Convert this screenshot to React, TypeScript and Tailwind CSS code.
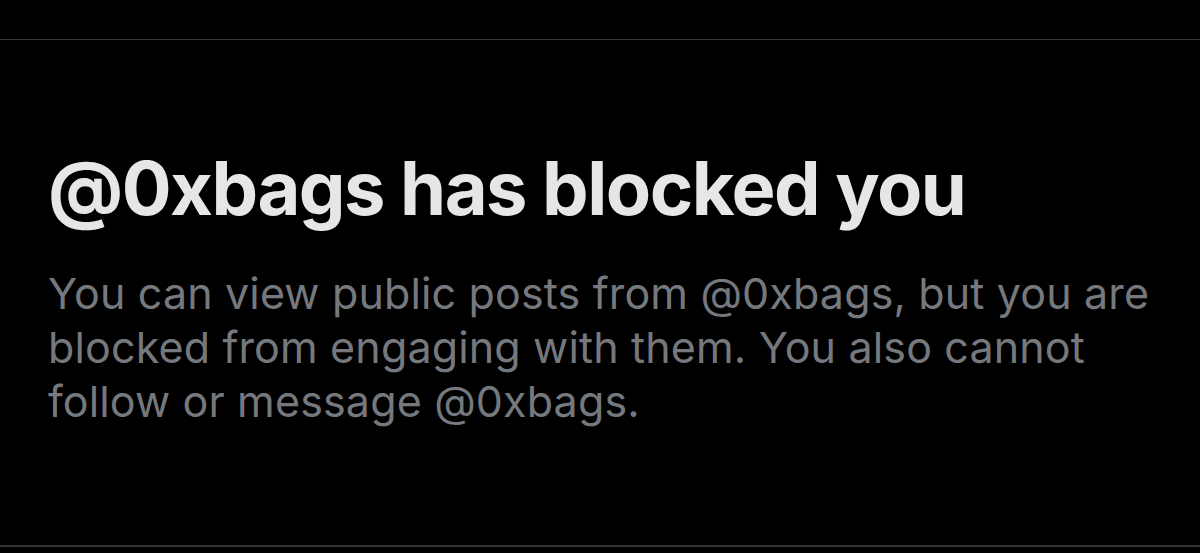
export default function App() {
  return (
    <div className="w-[1200px] h-[553px] bg-black flex flex-col overflow-hidden" style={{ fontFamily: "Inter, 'Noto Sans', sans-serif" }}>
      <div className="h-[39px] shrink-0" />
      <div className="border-t border-[#333639] flex-1 flex flex-col px-[48px] pt-[108px]">
        <h1 className="text-[74px] leading-[80px] font-bold text-[#e4e6e7] tracking-[-1.5px]">
          @0xbags has blocked you
        </h1>
        <p className="mt-[38px] w-[1120px] text-[43px] leading-[54px] text-[#75797e] tracking-[0.15px]">
          You can view public posts from @0xbags, but you are blocked from engaging with them. You also cannot follow or message @0xbags.
        </p>
      </div>
      <div className="h-[2px] bg-[#2f3336] shrink-0 mb-[6px]" />
    </div>
  );
}
